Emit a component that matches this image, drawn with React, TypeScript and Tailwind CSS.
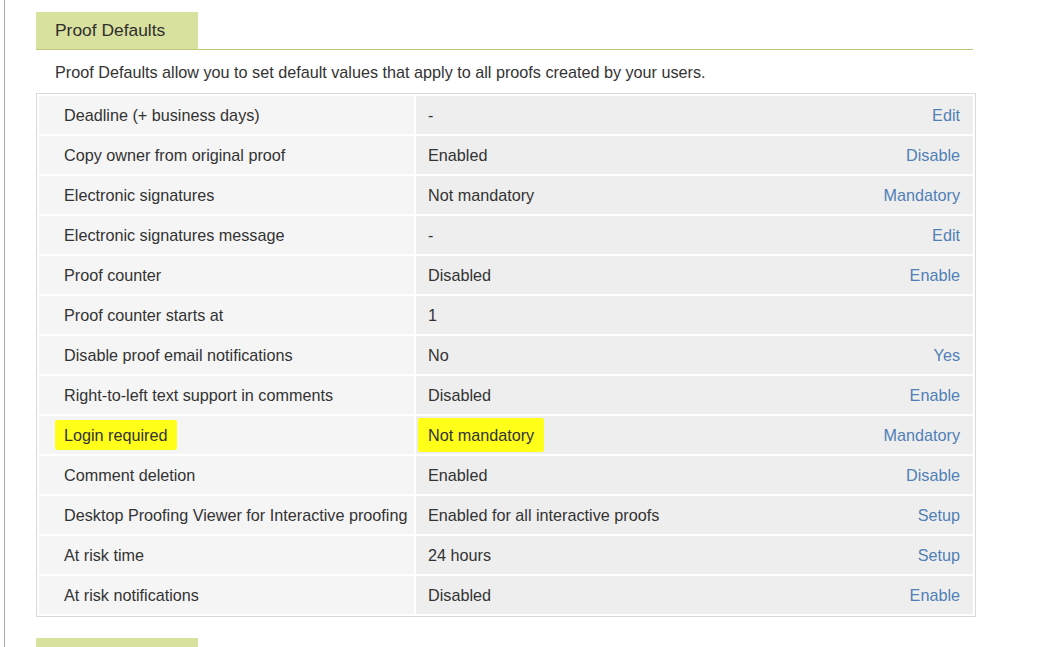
import React from 'react';

type Row = {
  label: string;
  value: string;
  action?: string;
  highlight?: boolean;
};

const rows: Row[] = [
  { label: 'Deadline (+ business days)', value: '-', action: 'Edit' },
  { label: 'Copy owner from original proof', value: 'Enabled', action: 'Disable' },
  { label: 'Electronic signatures', value: 'Not mandatory', action: 'Mandatory' },
  { label: 'Electronic signatures message', value: '-', action: 'Edit' },
  { label: 'Proof counter', value: 'Disabled', action: 'Enable' },
  { label: 'Proof counter starts at', value: '1' },
  { label: 'Disable proof email notifications', value: 'No', action: 'Yes' },
  { label: 'Right-to-left text support in comments', value: 'Disabled', action: 'Enable' },
  { label: 'Login required', value: 'Not mandatory', action: 'Mandatory', highlight: true },
  { label: 'Comment deletion', value: 'Enabled', action: 'Disable' },
  { label: 'Desktop Proofing Viewer for Interactive proofing', value: 'Enabled for all interactive proofs', action: 'Setup' },
  { label: 'At risk time', value: '24 hours', action: 'Setup' },
  { label: 'At risk notifications', value: 'Disabled', action: 'Enable' },
];

export default function App() {
  return (
    <div className="min-h-screen bg-white font-['Liberation_Sans',Arial,sans-serif] text-[#333] overflow-hidden">
      <div className="ml-[4px] h-[647px] border-l border-[#a8a8a8] pl-[31px] pt-[12px]">
        <div className="w-[940px]">
          <div className="w-[937px] border-b border-[#c3c77a]">
            <div className="flex h-[37px] w-[162px] items-center bg-[#d8e19d] pl-[19px] text-[17.4px] text-[#2f2f2f]">
              Proof Defaults
            </div>
          </div>

          <p className="mt-[13px] mb-[12px] pl-[19px] text-[16.2px] leading-[18px] text-[#333]">
            Proof Defaults allow you to set default values that apply to all proofs created by your users.
          </p>

          <table className="w-[940px] border-separate border-spacing-[2px] border border-[#d9d9d9] text-[16.2px]">
            <tbody>
              {rows.map((row) => (
                <tr key={row.label}>
                  <td className="h-[38px] w-[375px] bg-[#f5f5f5] pl-[25px] align-middle">
                    {row.highlight ? (
                      <span className="-ml-[9px] inline-block rounded-[2px] bg-[#ffff1a] px-[9px] py-[3px]">
                        {row.label}
                      </span>
                    ) : (
                      row.label
                    )}
                  </td>
                  <td className="h-[38px] bg-[#eeeeee] align-middle">
                    <div className="flex items-center justify-between pl-[12px] pr-[13px]">
                      {row.highlight ? (
                        <span className="-ml-[10px] inline-block rounded-[2px] bg-[#ffff1a] px-[10px] py-[5px]">
                          {row.value}
                        </span>
                      ) : (
                        <span>{row.value}</span>
                      )}
                      {row.action && <a className="cursor-pointer text-[#5080b5]">{row.action}</a>}
                    </div>
                  </td>
                </tr>
              ))}
            </tbody>
          </table>

          <div className="mt-[21px] h-[37px] w-[162px] bg-[#d8e19d]" />
        </div>
      </div>
    </div>
  );
}
